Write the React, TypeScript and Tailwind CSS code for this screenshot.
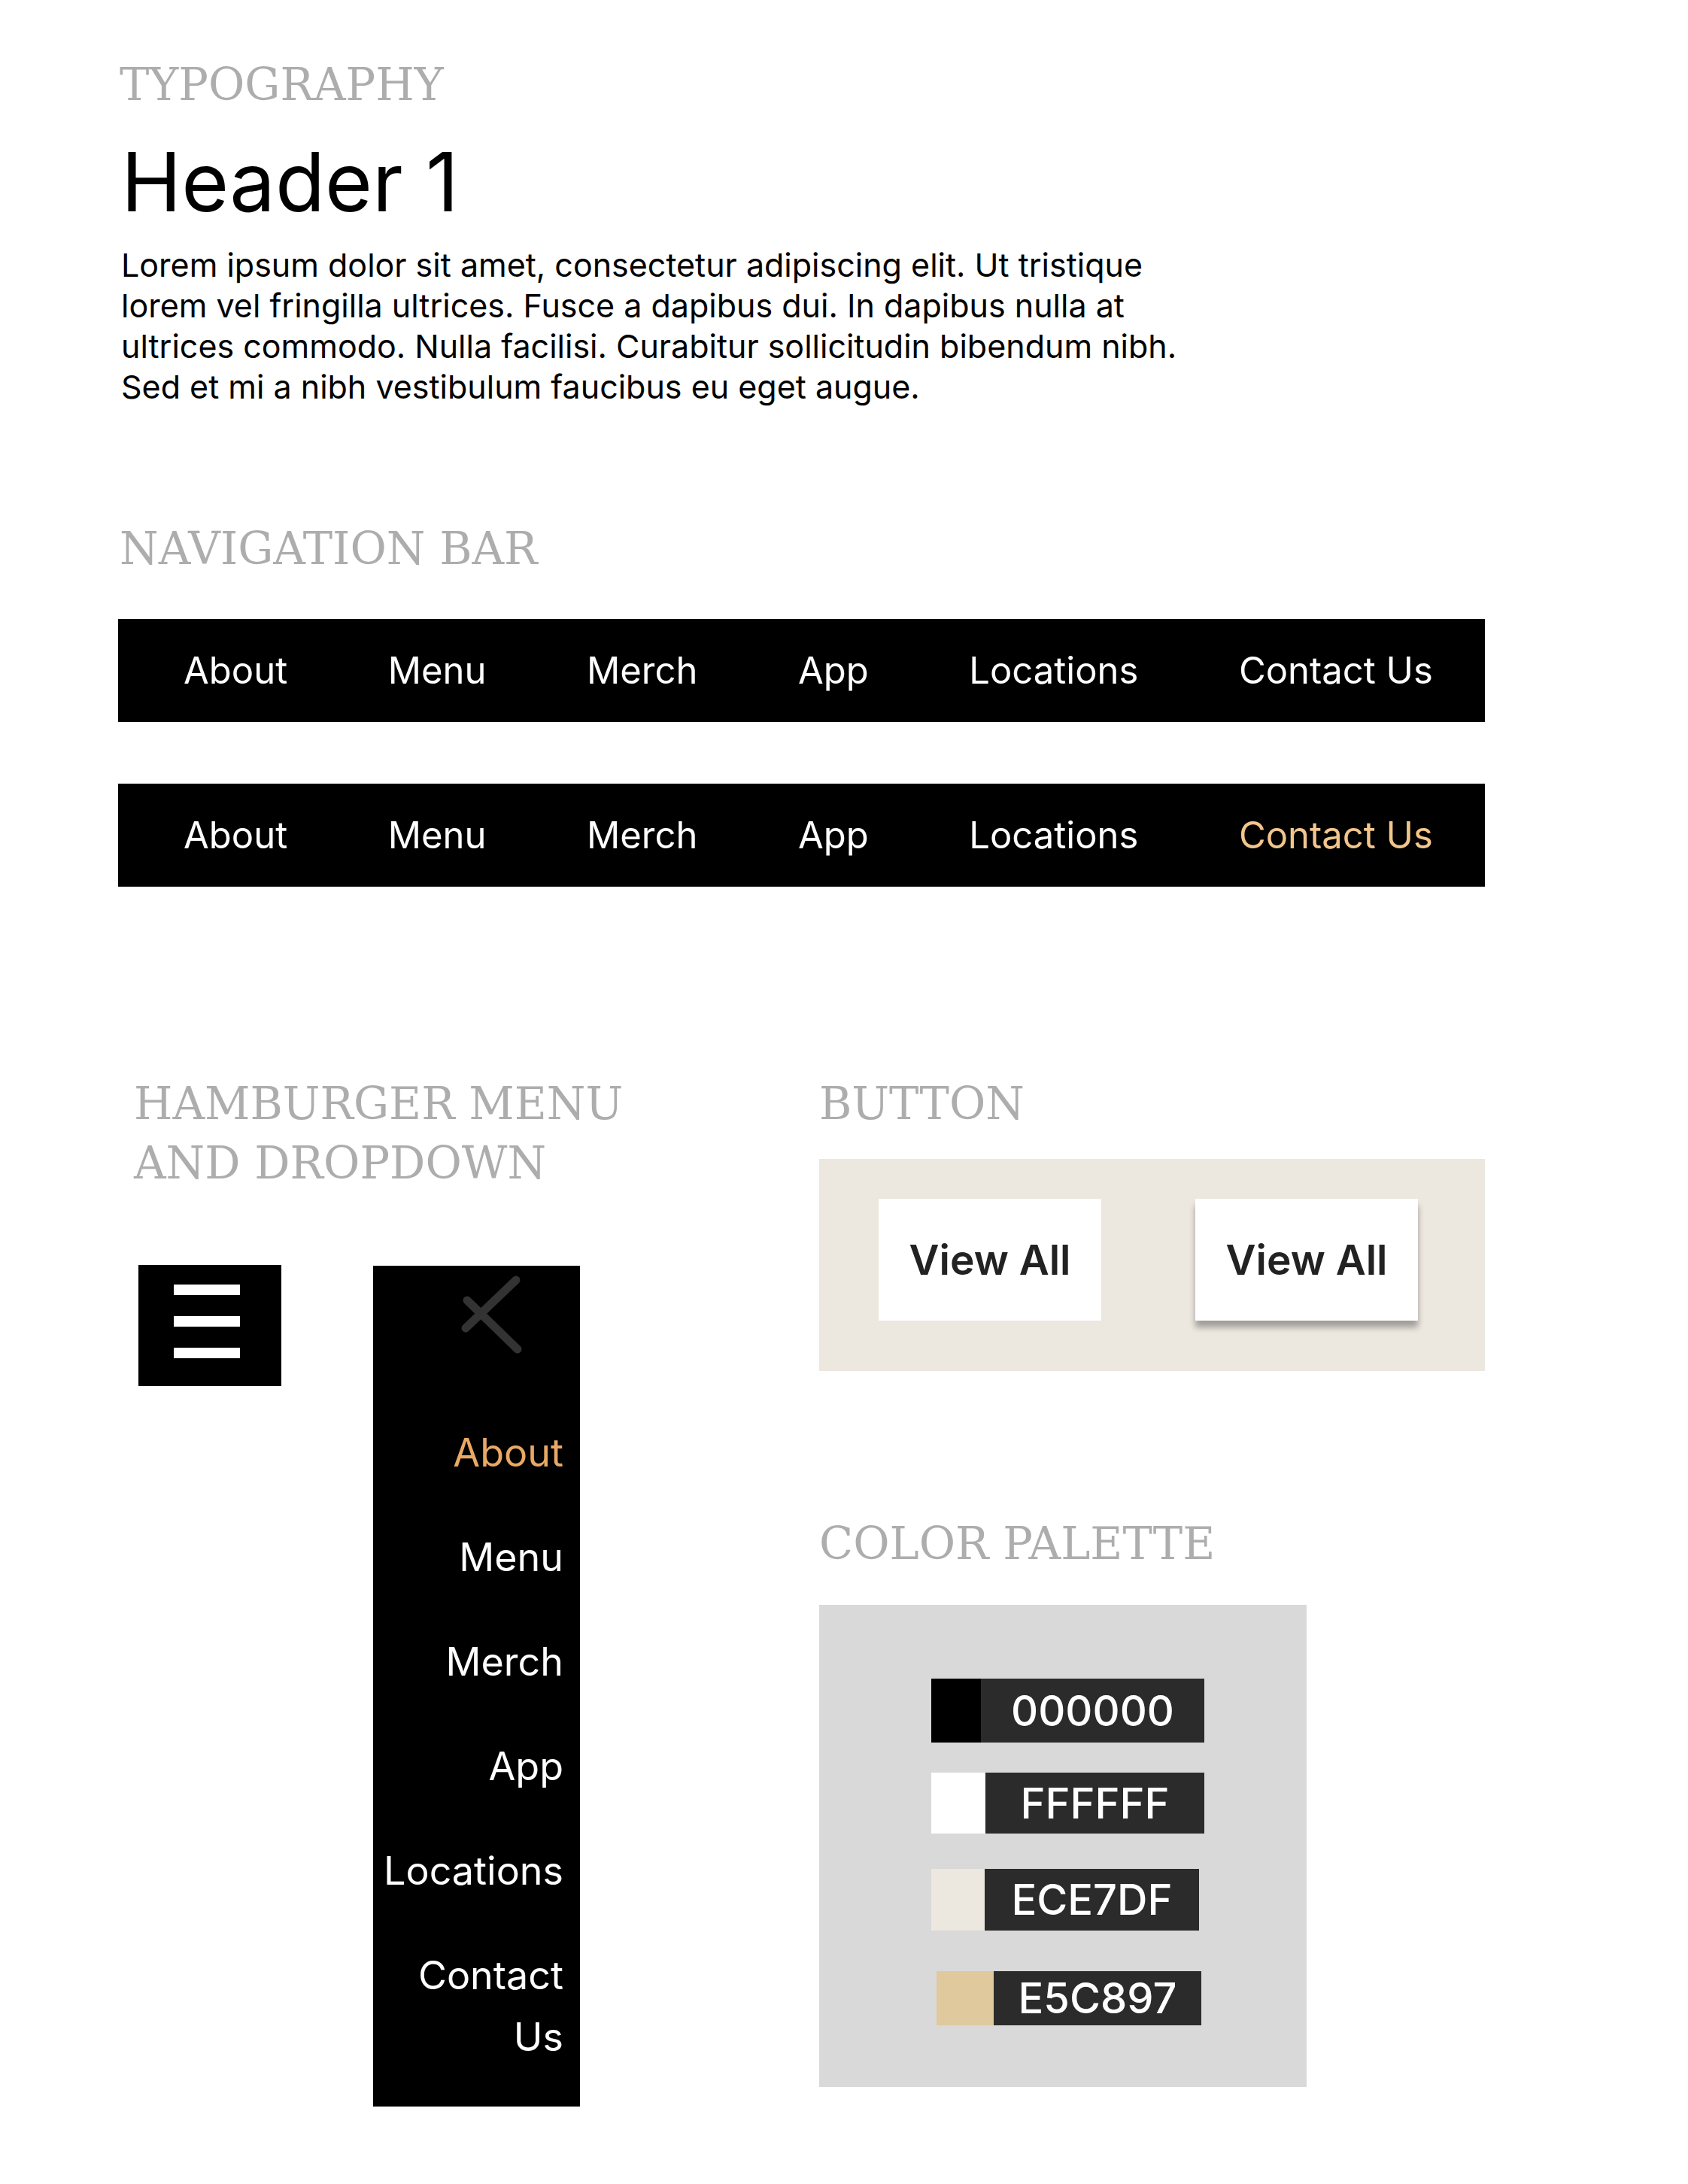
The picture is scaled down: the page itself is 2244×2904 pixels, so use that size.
import { ReactNode } from "react";

const navItems = ["About", "Menu", "Merch", "App", "Locations", "Contact Us"];

const swatches = [
  { code: "000000", color: "bg-[#000000]", row: "ml-[149px] mt-[98px] w-[363px] h-[85px]", sw: "w-[66px]" },
  { code: "FFFFFF", color: "bg-[#ffffff]", row: "ml-[149px] mt-[40px] w-[363px] h-[81px]", sw: "w-[72px]" },
  { code: "ECE7DF", color: "bg-[#ece7df]", row: "ml-[149px] mt-[47px] w-[356px] h-[82px]", sw: "w-[71px]" },
  { code: "E5C897", color: "bg-[#dfc99d]", row: "ml-[156px] mt-[54px] w-[352px] h-[72px]", sw: "w-[76px]" },
];

function Label({ children, className = "" }: { children: ReactNode; className?: string }) {
  return (
    <h2 className={`font-['DejaVu_Serif',serif] text-[59px] leading-[79px] font-normal text-[#adadad] uppercase ${className}`}>
      {children}
    </h2>
  );
}

function NavBar({ active }: { active?: string }) {
  return (
    <nav className="h-[137px] bg-black flex items-center justify-between pl-[87px] pr-[69px]">
      {navItems.map((item) => (
        <span
          key={item}
          className={`text-[49px] font-['Inter',sans-serif] ${item === active ? "text-[#f2c58c]" : "text-white"}`}
        >
          {item}
        </span>
      ))}
    </nav>
  );
}

export default function App() {
  return (
    <div className="min-h-[2904px] w-[2244px] bg-white pl-[157px] pt-[73px] font-['Inter',sans-serif] text-black">
      <div className="w-[1817px]">
        {/* Typography */}
        <Label className="pl-[2px]">Typography</Label>
        <h1 className="mt-[36px] pl-[4px] text-[108px] leading-[108px] font-normal">Header 1</h1>
        <p className="mt-[29px] pl-[4px] text-[43px] leading-[54px] whitespace-nowrap">
          Lorem ipsum dolor sit amet, consectetur adipiscing elit. Ut tristique
          <br />
          lorem vel fringilla ultrices. Fusce a dapibus dui. In dapibus nulla at
          <br />
          ultrices commodo. Nulla facilisi. Curabitur sollicitudin bibendum nibh.
          <br />
          Sed et mi a nibh vestibulum faucibus eu eget augue.
        </p>

        {/* Navigation bar */}
        <Label className="mt-[149px] pl-[2px]">Navigation Bar</Label>
        <div className="mt-[54px]">
          <NavBar />
        </div>
        <div className="mt-[82px]">
          <NavBar active="Contact Us" />
        </div>

        {/* Lower section */}
        <div className="mt-[249px] flex">
          <div className="w-[932px] pl-[21px]">
            <Label>
              Hamburger Menu
              <br />
              And Dropdown
            </Label>
            <div className="mt-[96px] pl-[6px] flex items-start gap-[122px]">
              <div className="w-[190px] h-[161px] bg-black pt-[26px] pl-[47px] flex flex-col gap-[28px]">
                <div className="w-[88px] h-[14px] bg-white" />
                <div className="w-[88px] h-[14px] bg-white" />
                <div className="w-[88px] h-[14px] bg-white" />
              </div>
              <div className="mt-[1px] w-[275px] h-[1118px] bg-black">
                <svg width="275" height="120" viewBox="0 0 275 120" className="block">
                  <line x1="190" y1="19" x2="123" y2="83" stroke="#333333" strokeWidth="11" strokeLinecap="round" />
                  <line x1="125" y1="46" x2="192" y2="111" stroke="#333333" strokeWidth="11" strokeLinecap="round" />
                </svg>
                <ul className="mt-[88px] pr-[22px] flex flex-col gap-[57px] text-right text-[52px] leading-[82px] text-white">
                  <li className="text-[#e9a864]">About</li>
                  <li>Menu</li>
                  <li>Merch</li>
                  <li>App</li>
                  <li>Locations</li>
                  <li>
                    Contact
                    <br />
                    Us
                  </li>
                </ul>
              </div>
            </div>
          </div>

          <div className="flex-1">
            <Label>Button</Label>
            <div className="mt-[34px] h-[282px] bg-[#ece7df] pt-[53px] pl-[79px] flex gap-[125px]">
              <button className="w-[296px] h-[162px] bg-white text-[55px] font-semibold text-[#222222]">
                View All
              </button>
              <button className="w-[296px] h-[162px] bg-white text-[55px] font-semibold text-[#222222] shadow-[0_9px_8px_rgba(0,0,0,0.32)]">
                View All
              </button>
            </div>

            <Label className="mt-[190px]">Color Palette</Label>
            <div className="mt-[42px] w-[648px] h-[641px] bg-[#d9d9d9] flex flex-col">
              {swatches.map((s) => (
                <div key={s.code} className={`flex bg-[#2b2b2b] ${s.row}`}>
                  <div className={`${s.sw} h-full ${s.color}`} />
                  <div className="flex-1 flex items-center justify-center text-[56px] font-medium text-white">
                    {s.code}
                  </div>
                </div>
              ))}
            </div>
          </div>
        </div>
      </div>
    </div>
  );
}
